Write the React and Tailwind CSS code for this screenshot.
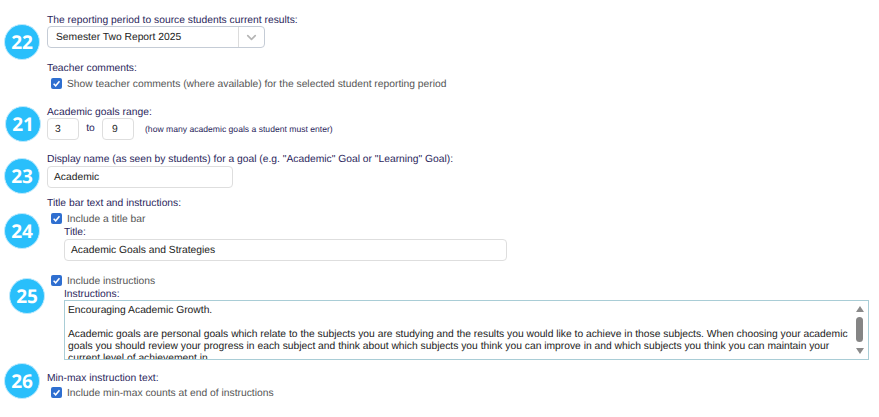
import React from 'react';
import { ChevronDown } from 'lucide-react';

const Badge = ({ n, className = '' }) => (
  <div className={`w-[36px] h-[36px] rounded-full bg-[#29bffb] border border-[#bfeafd] flex items-center justify-center text-white font-bold text-[19px] font-['Open_Sans',sans-serif] shrink-0 ${className}`}>
    {n}
  </div>
);

const Label = ({ children, className = '' }) => (
  <div className={`h-[12px] leading-[14px] text-[10.3px] text-[#2b1f5c] whitespace-nowrap ${className}`}>{children}</div>
);

const Check = ({ children, className = '' }) => (
  <div className={`flex items-center h-[12px] ${className}`}>
    <span className="w-[11px] h-[11px] ml-[4px] mr-[5px] rounded-[2px] bg-[#2f6fd0] flex items-center justify-center shrink-0">
      <svg width="9" height="9" viewBox="0 0 10 10" fill="none">
        <path d="M1.8 5.2 L4.1 7.5 L8.3 2.6" stroke="#fff" strokeWidth="1.7" />
      </svg>
    </span>
    <span className="pt-[3px] text-[10.3px] leading-[12px] text-[#555] whitespace-nowrap">{children}</span>
  </div>
);

const Field = ({ children, className = '' }) => (
  <div className={`h-[22px] pt-[2px] bg-white border border-[#dedede] rounded-[4px] flex items-center text-[10.3px] text-[#222] ${className}`}>
    {children}
  </div>
);

const App = () => {
  return (
    <div className="w-[879px] h-[417px] bg-white overflow-hidden pt-[14px] font-['Liberation_Sans',Arial,sans-serif] [text-rendering:geometricPrecision]">
      {/* reporting period + teacher comments */}
      <div className="flex h-[92px]">
        <div className="w-[47px] shrink-0 pl-[4px] pt-[10px]"><Badge n="22" /></div>
        <div>
          <Label>The reporting period to source students current results:</Label>
          <div className="w-[218px] h-[22px] border border-[#c5ccd6] rounded-[4px] flex items-center text-[10.3px] text-[#222]">
            <span className="w-[191px] pl-[8px] pt-[2px] border-r border-[#dcdcdc] h-full flex items-center">Semester Two Report 2025</span>
            <span className="flex-1 flex justify-center"><ChevronDown size={15} className="text-[#b5b5b5]" strokeWidth={2.6} /></span>
          </div>
          <Label className="mt-[14px]">Teacher comments:</Label>
          <Check className="mt-[3px]">Show teacher comments (where available) for the selected student reporting period</Check>
        </div>
      </div>

      {/* goals range */}
      <div className="flex h-[47px]">
        <div className="w-[47px] shrink-0 pl-[5px]"><Badge n="21" /></div>
        <div>
          <Label>Academic goals range:</Label>
          <div className="flex items-center">
            <Field className="w-[32px] pl-[7px]">3</Field>
            <span className="w-[23px] text-center text-[10.3px] text-[#2b1f5c]">to</span>
            <Field className="w-[32px] pl-[9px]">9</Field>
            <span className="ml-[11px] text-[8.6px] text-[#2b1f5c]">(how many academic goals a student must enter)</span>
          </div>
        </div>
      </div>

      {/* display name */}
      <div className="flex h-[44px]">
        <div className="w-[47px] shrink-0 pl-[4px] pt-[5px]"><Badge n="23" /></div>
        <div>
          <Label>Display name (as seen by students) for a goal (e.g. "Academic" Goal or "Learning" Goal):</Label>
          <Field className="w-[186px] pl-[6px] mt-[1px]">Academic</Field>
        </div>
      </div>

      {/* title bar */}
      <div className="flex h-[77px]">
        <div className="w-[47px] shrink-0 pl-[4px] pt-[16px]"><Badge n="24" /></div>
        <div>
          <Label>Title bar text and instructions:</Label>
          <Check className="mt-[3px]">Include a title bar</Check>
          <div className="pl-[17px] mt-[2px]">
            <Label>Title:</Label>
            <Field className="w-[443px] pl-[6px] mt-[1px]">Academic Goals and Strategies</Field>
          </div>
        </div>
      </div>

      {/* instructions */}
      <div className="flex h-[89px]">
        <div className="w-[47px] shrink-0 pl-[9px] pt-[4px]"><Badge n="25" /></div>
        <div>
          <Check>Include instructions</Check>
          <div className="pl-[17px] mt-[2px]">
            <Label>Instructions:</Label>
            <div className="w-[805px] h-[60px] border border-[#a9cdd6] flex overflow-hidden text-[10.3px] leading-[12px] text-[#222]">
              <div className="w-[786px] pl-[3px] pt-[4px] shrink-0">
                <p>Encouraging Academic Growth.</p>
                <p className="mt-[12px]">Academic goals are personal goals which relate to the subjects you are studying and the results you would like to achieve in those subjects. When choosing your academic goals you should review your progress in each subject and think about which subjects you think you can improve in and which subjects you think you can maintain your current level of achievement in</p>
              </div>
              <div className="flex-1 flex flex-col items-center pt-[5px]">
                <span className="w-0 h-0 border-x-[4px] border-x-transparent border-b-[6px] border-b-[#8a8a8a]"></span>
                <span className="w-[7px] h-[25px] mt-[5px] rounded-full bg-[#858585]"></span>
                <span className="w-0 h-0 mt-[6px] border-x-[4px] border-x-transparent border-t-[6px] border-t-[#8a8a8a]"></span>
              </div>
            </div>
          </div>
        </div>
      </div>

      {/* min-max */}
      <div className="flex">
        <div className="w-[47px] shrink-0 pl-[4px]"><Badge n="26" /></div>
        <div className="pt-[9px]">
          <Label>Min-max instruction text:</Label>
          <Check className="mt-[2px]">Include min-max counts at end of instructions</Check>
        </div>
      </div>
    </div>
  );
};

export default App;
